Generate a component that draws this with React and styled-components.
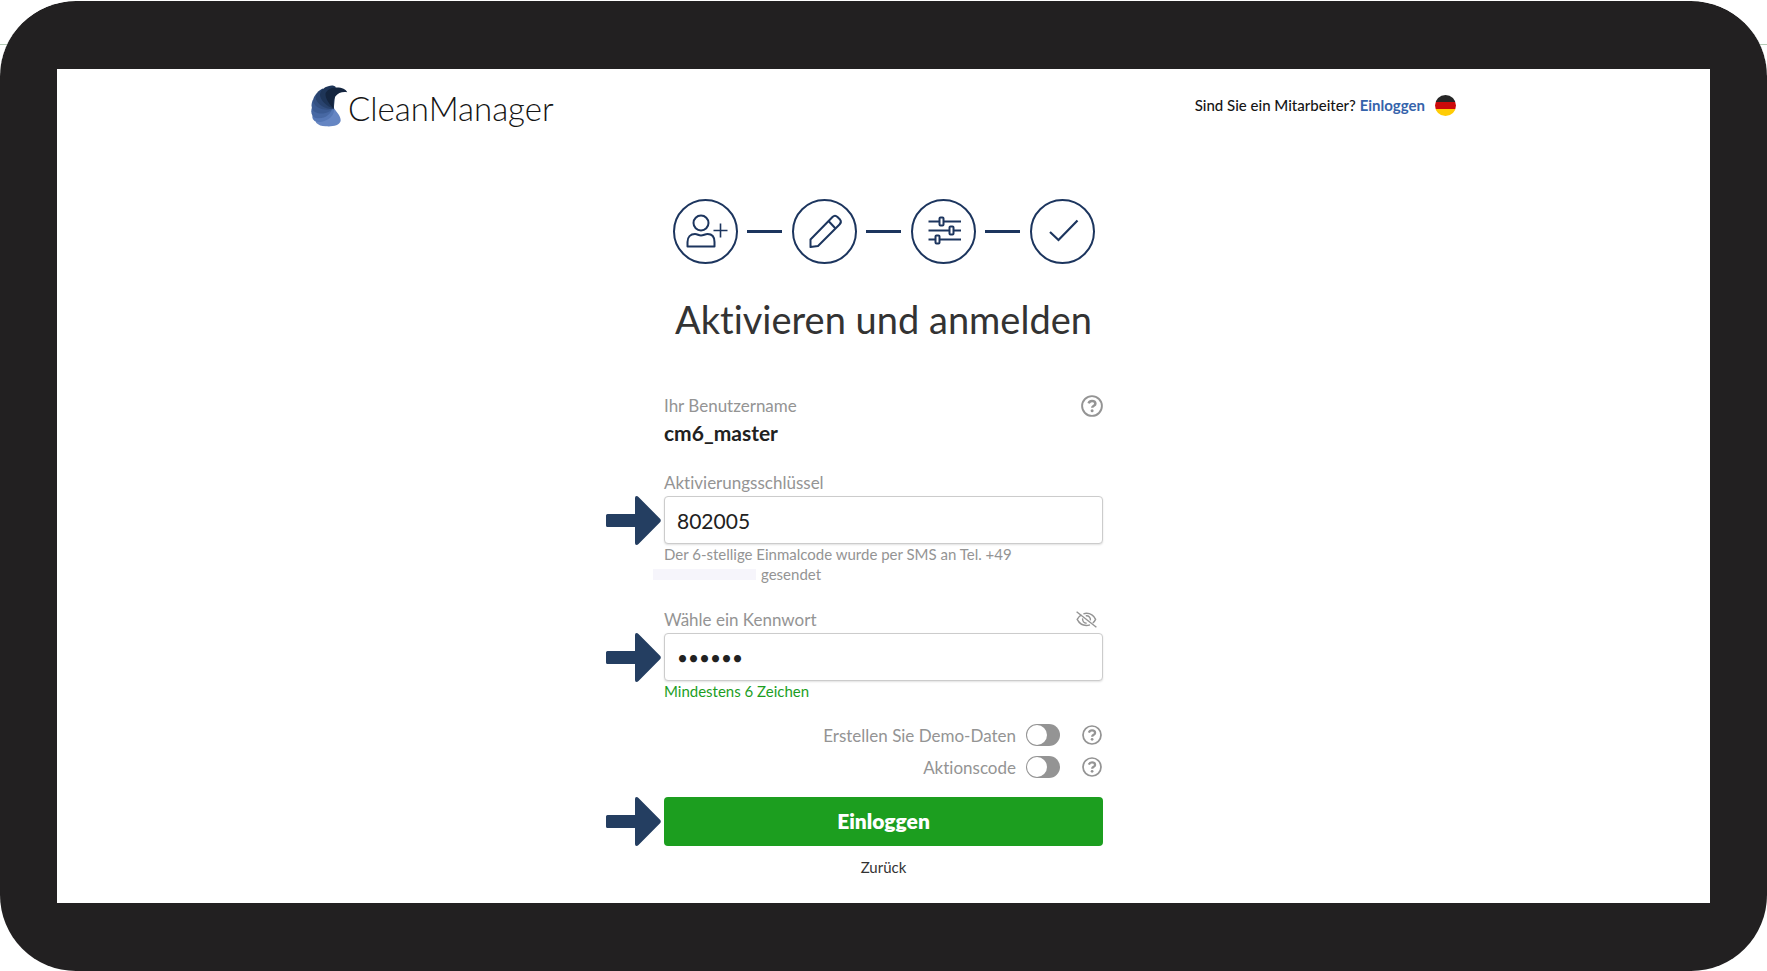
import React, { useState } from "react";
import styled, { createGlobalStyle } from "styled-components";

const navy = "#1c355e";
const grey = "#949494";

const GlobalStyle = createGlobalStyle`
  *, *::before, *::after { box-sizing: border-box; }
  body {
    margin: 0;
    background: linear-gradient(#b4cbb6, #b4cbb6) 0 44px / 100% 1px no-repeat #fff;
    color: #212121;
    font-family: Lato, "Liberation Sans", sans-serif;
    font-variant-ligatures: none;
  }
`;

const Frame = styled.div`
  display: flex;
  min-height: 100vh;
  padding: 68px 57px;
  border-top: 1px solid #fff;
  border-radius: 76px;
  background: #222021;
  background-clip: padding-box;
`;

const Screen = styled.div`
  flex: 1;
  min-width: 0;
  padding: 0 24px 16px;
  background: #fff;
`;

const Header = styled.header`
  display: flex;
  justify-content: space-between;
  align-items: flex-start;
  max-width: 1145px;
  margin: 0 auto;
  padding-top: 16px;
`;

const Brand = styled.a`
  display: flex;
  align-items: flex-start;
  color: #151515;
  font-size: 33px;
  font-weight: 300;
  line-height: 47px;
  text-decoration: none;
`;

const Account = styled.div`
  display: flex;
  align-items: center;
  gap: 10px;
  height: 40px;
  color: #151515;
  font-size: 15px;
  font-weight: 500;
`;

const AccountLink = styled.a`
  color: #3563ab;
  font-weight: 700;
  text-decoration: none;
`;

const FlagButton = styled.button`
  display: flex;
  padding: 0;
  border: 0;
  background: none;
`;

const Main = styled.main`
  display: flex;
  flex-direction: column;
  align-items: center;
`;

const Steps = styled.ol`
  display: flex;
  align-items: center;
  gap: 10px;
  margin: 67px 0 0;
  padding: 0;
  list-style: none;
`;

const Step = styled.li`
  display: flex;
  align-items: center;
  gap: 9px;

  &:not(:last-child)::after {
    content: "";
    width: 35px;
    height: 3px;
    background: ${navy};
  }
`;

const StepCircle = styled.span`
  display: flex;
  width: 65px;
  height: 65px;
  border: 2px solid ${navy};
  border-radius: 50%;
`;

const StepSvg = styled.svg`
  width: 61px;
  height: 61px;
  fill: none;
  stroke: ${navy};
  stroke-width: 2;
  stroke-linejoin: round;
`;

const Title = styled.h1`
  margin: 31px 0 0;
  color: #333;
  font-size: 38px;
  font-weight: 400;
  line-height: 48px;
`;

const Form = styled.form`
  width: 100%;
  max-width: 439px;
  margin-top: 49px;
`;

const UserBlock = styled.div`
  display: flex;
  justify-content: space-between;
  align-items: flex-start;
  margin-bottom: 22px;
`;

const UserText = styled.dl`
  margin: 0;
`;

const UserLabel = styled.dt`
  color: ${grey};
  font-size: 17px;
  line-height: 27px;
`;

const UserName = styled.dd`
  margin: 0;
  font-size: 21px;
  font-weight: 700;
  line-height: 28px;
`;

const Field = styled.div`
  margin-bottom: ${(p) => p.$gap}px;
`;

const LabelRow = styled.div`
  display: flex;
  justify-content: space-between;
  align-items: center;
  padding-right: 6px;
`;

const Label = styled.label`
  color: ${grey};
  font-size: 17px;
  line-height: 27px;
`;

const Pointed = styled.div`
  position: relative;
`;

const Pointer = styled.svg`
  position: absolute;
  top: 0;
  right: calc(100% + 3px);
  width: 55px;
  height: 49px;
  fill: #243e61;
`;

const Input = styled.input`
  display: block;
  width: 100%;
  height: 48px;
  padding: 0 12px;
  border: 1px solid #ccc;
  border-radius: 4px;
  outline: none;
  background: #fff;
  box-shadow: 0 1px 2px rgba(0, 0, 0, 0.12);
  color: #212121;
  font-family: inherit;
  font-size: ${(p) => (p.type === "password" ? 19 : 21)}px;
`;

const Hint = styled.p`
  margin: 0;
  color: ${(p) => (p.$valid ? "#1c9e1f" : grey)};
  font-size: 15px;
  line-height: 20px;
`;

const HiddenNumber = styled.span`
  display: inline-block;
  width: 103px;
  height: 11px;
  margin: 0 5px 0 -11px;
  background: #f6f5fb;
`;

const IconButton = styled.button`
  display: flex;
  padding: 0;
  border: 0;
  background: none;
  color: ${grey};
`;

const UserHelp = styled(IconButton)`
  margin-top: 3px;
`;

const Option = styled.div`
  display: flex;
  justify-content: flex-end;
  align-items: center;
  height: 32px;
  padding-right: 1px;
`;

const OptionLabel = styled.label`
  display: flex;
  align-items: center;
  gap: 10px;
  margin-right: 22px;
  color: ${grey};
  font-size: 17px;
`;

const Toggle = styled.input`
  appearance: none;
  display: flex;
  width: 34px;
  height: 22px;
  margin: 0;
  padding: 1px;
  border-radius: 11px;
  background: ${(p) => (p.checked ? "#1c9e1f" : grey)};

  &::before {
    content: "";
    width: 20px;
    height: 20px;
    margin-left: ${(p) => (p.checked ? "auto" : 0)};
    border-radius: 50%;
    background: #fff;
  }
`;

const Submit = styled.button`
  display: block;
  width: 100%;
  height: 49px;
  padding: 0 0 3px;
  border: 0;
  border-radius: 4px;
  background: #1c9e1f;
  color: #fff;
  font-family: inherit;
  font-size: 21px;
  font-weight: 800;
`;

const SubmitRow = styled(Pointed)`
  margin-top: 14px;
`;

const Back = styled.a`
  display: block;
  width: fit-content;
  margin: 11px auto 0;
  color: #333;
  font-size: 15px;
  line-height: 20px;
  text-decoration: none;
`;

function LogoMark() {
  return (
    <svg width="37" height="42" viewBox="36 44 112 128" aria-hidden="true">
      <path fill="#6686c3" d="M103 108C108 124 128 136 126 154C122 168 100 172 80 170C68 170 58 166 52 160C44 150 62 128 103 108Z" />
      <path fill="#5678b6" d="M103 110C112 126 98 154 58 157C46 157 38 148 40 138Z" />
      <path fill="#4768a3" d="M102 112C98 134 74 151 48 144C38 140 34 128 38 114Z" />
      <path fill="#3b5b93" d="M103 112C96 130 64 138 44 124C35 114 36 98 42 88Z" />
      <path fill="#335082" d="M104 114C84 126 54 116 46 102C38 92 44 78 54 68Z" />
      <path fill="#29436e" d="M106 118C78 118 56 102 51 88C48 72 58 60 72 55Z" />
      <path fill="#1e3558" d="M105 116C84 110 64 92 63 74C64 60 76 51 88 48C98 44 106 45 111 50Z" />
      <path fill="#14253f" d="M105 116C92 102 78 86 80 68C86 58 96 52 108 52C126 50 142 56 146 66C118 62 98 80 105 116Z" />
    </svg>
  );
}

function Flag() {
  return (
    <svg width="21" height="21" viewBox="0 0 21 21" aria-hidden="true">
      <clipPath id="flag-round">
        <circle cx="10.5" cy="10.5" r="10.5" />
      </clipPath>
      <g clipPath="url(#flag-round)">
        <rect width="21" height="7" fill="#262626" />
        <rect y="7" width="21" height="7" fill="#cc0a0a" />
        <rect y="14" width="21" height="7" fill="#ffcc05" />
      </g>
    </svg>
  );
}

function HelpIcon({ size }) {
  return (
    <svg width={size} height={size} viewBox="0 0 22 22" fill="none" stroke="currentColor" aria-hidden="true">
      <circle cx="11" cy="11" r="9.9" strokeWidth="1.9" />
      <path d="M7.6 8.4C8.2 6.6 9.5 6 11 6C13 6 14.4 7.1 14.4 8.7C14.4 10.8 11.2 10.7 11.2 12.8" strokeWidth="2.5" />
      <circle cx="11.1" cy="15.8" r="1.5" fill="currentColor" stroke="none" />
    </svg>
  );
}

function EyeOffIcon() {
  return (
    <svg width="21" height="17" viewBox="0 0 21 17" fill="none" stroke="currentColor" strokeWidth="1.4" aria-hidden="true">
      <path d="M.6.7L20.4 16.2" />
      <path d="M5.4 3.8C3.4 5 2 6.8 1.2 8.4C3.2 12.4 6.6 14.5 10.4 14.5C11.6 14.5 12.8 14.2 14 13.8" />
      <path d="M7.4 2.8C8.4 2.5 9.4 2.3 10.5 2.3C14.4 2.3 17.8 4.6 19.6 8.4C19 9.8 18 11 16.8 12" />
      <path d="M6.6 7.4C6.2 10.2 8 12.2 10.6 12.2" />
      <path d="M9.8 4.8C12.8 4.4 14.8 6.8 14.4 9.4" />
    </svg>
  );
}

function PointerArrow() {
  return (
    <Pointer viewBox="0 0 55 49" aria-hidden="true">
      <path d="M1.5 18H29V2Q29 0 30.5 0Q31.5 0 32.5 1L54.3 23Q55.3 24.5 54.3 26L32.5 48Q31.5 49 30.5 49Q29 49 29 47V31H1.5Q0 31 0 29.5V19.5Q0 18 1.5 18Z" />
    </Pointer>
  );
}

const steps = [
  {
    name: "Benutzer anlegen",
    art: (
      <>
        <circle cx="26" cy="22" r="7.5" />
        <path d="M12.5 45.5V41C12.5 36 15.5 33 20 33C22.5 33 23.5 34.5 26 34.5C28.5 34.5 30 33 32.500 33C37 33 39.500 36 39.500 41V45.500Z" />
        <path d="M45.5 22.5V36.5M38.5 29.5H52.5" strokeWidth="1.6" />
      </>
    ),
  },
  {
    name: "Daten eingeben",
    art: (
      <>
        <path d="M16.5 46V38.5L38.5 16Q41 13.5 43.5 16L46 18.5Q48 21 45.5 23.5L24 45L16.5 46Z" />
        <path d="M34.5 20L41.5 27.5" />
      </>
    ),
  },
  {
    name: "Einstellungen",
    art: (
      <>
        <path d="M15.5 20.5H26M30 20.5H48M15.5 29.5H36M40 29.5H48M15.5 38.5H22M27 38.5H48" />
        <rect x="26.5" y="16.5" width="4" height="8" rx="1" />
        <rect x="36.5" y="25.5" width="4" height="8" rx="1" />
        <rect x="22.5" y="34.5" width="4" height="8" rx="1" />
      </>
    ),
  },
  {
    name: "Fertig",
    art: <path d="M18 31L26.5 39L45.5 19.5" strokeWidth="2.2" strokeLinejoin="miter" />,
  },
];

export default function App() {
  const [code, setCode] = useState("802005");
  const [password, setPassword] = useState("geheim");
  const [visible, setVisible] = useState(false);
  const [demo, setDemo] = useState(false);
  const [promo, setPromo] = useState(false);

  return (
    <>
      <GlobalStyle />
      <Frame>
        <Screen>
          <Header>
            <Brand href="#">
              <LogoMark />
              CleanManager
            </Brand>
            <Account>
              <span>
                Sind Sie ein Mitarbeiter? <AccountLink href="#">Einloggen</AccountLink>
              </span>
              <FlagButton type="button" aria-label="Deutsch">
                <Flag />
              </FlagButton>
            </Account>
          </Header>
          <Main>
            <Steps>
              {steps.map((step) => (
                <Step key={step.name}>
                  <StepCircle>
                    <StepSvg viewBox="0 0 61 61" role="img" aria-label={step.name}>
                      {step.art}
                    </StepSvg>
                  </StepCircle>
                </Step>
              ))}
            </Steps>
            <Title>Aktivieren und anmelden</Title>
            <Form onSubmit={(e) => e.preventDefault()}>
              <UserBlock>
                <UserText>
                  <UserLabel>Ihr Benutzername</UserLabel>
                  <UserName>cm6_master</UserName>
                </UserText>
                <UserHelp type="button" aria-label="Hilfe zum Benutzernamen">
                  <HelpIcon size={22} />
                </UserHelp>
              </UserBlock>
              <Field $gap={22}>
                <LabelRow>
                  <Label htmlFor="code">Aktivierungsschlüssel</Label>
                </LabelRow>
                <Pointed>
                  <PointerArrow />
                  <Input id="code" type="text" value={code} onChange={(e) => setCode(e.target.value)} />
                </Pointed>
                <Hint>
                  Der 6-stellige Einmalcode wurde per SMS an Tel. +49
                  <br />
                  <HiddenNumber />
                  gesendet
                </Hint>
              </Field>
              <Field $gap={18}>
                <LabelRow>
                  <Label htmlFor="password">Wähle ein Kennwort</Label>
                  <IconButton type="button" aria-label="Kennwort anzeigen" onClick={() => setVisible(!visible)}>
                    <EyeOffIcon />
                  </IconButton>
                </LabelRow>
                <Pointed>
                  <PointerArrow />
                  <Input
                    id="password"
                    type={visible ? "text" : "password"}
                    value={password}
                    onChange={(e) => setPassword(e.target.value)}
                  />
                </Pointed>
                <Hint $valid={password.length >= 6}>Mindestens 6 Zeichen</Hint>
              </Field>
              <Option>
                <OptionLabel>
                  Erstellen Sie Demo-Daten
                  <Toggle type="checkbox" checked={demo} onChange={(e) => setDemo(e.target.checked)} />
                </OptionLabel>
                <IconButton type="button" aria-label="Hilfe zu Demo-Daten">
                  <HelpIcon size={20} />
                </IconButton>
              </Option>
              <Option>
                <OptionLabel>
                  Aktionscode
                  <Toggle type="checkbox" checked={promo} onChange={(e) => setPromo(e.target.checked)} />
                </OptionLabel>
                <IconButton type="button" aria-label="Hilfe zum Aktionscode">
                  <HelpIcon size={20} />
                </IconButton>
              </Option>
              <SubmitRow>
                <PointerArrow />
                <Submit type="submit">Einloggen</Submit>
              </SubmitRow>
              <Back href="#">Zurück</Back>
            </Form>
          </Main>
        </Screen>
      </Frame>
    </>
  );
}
